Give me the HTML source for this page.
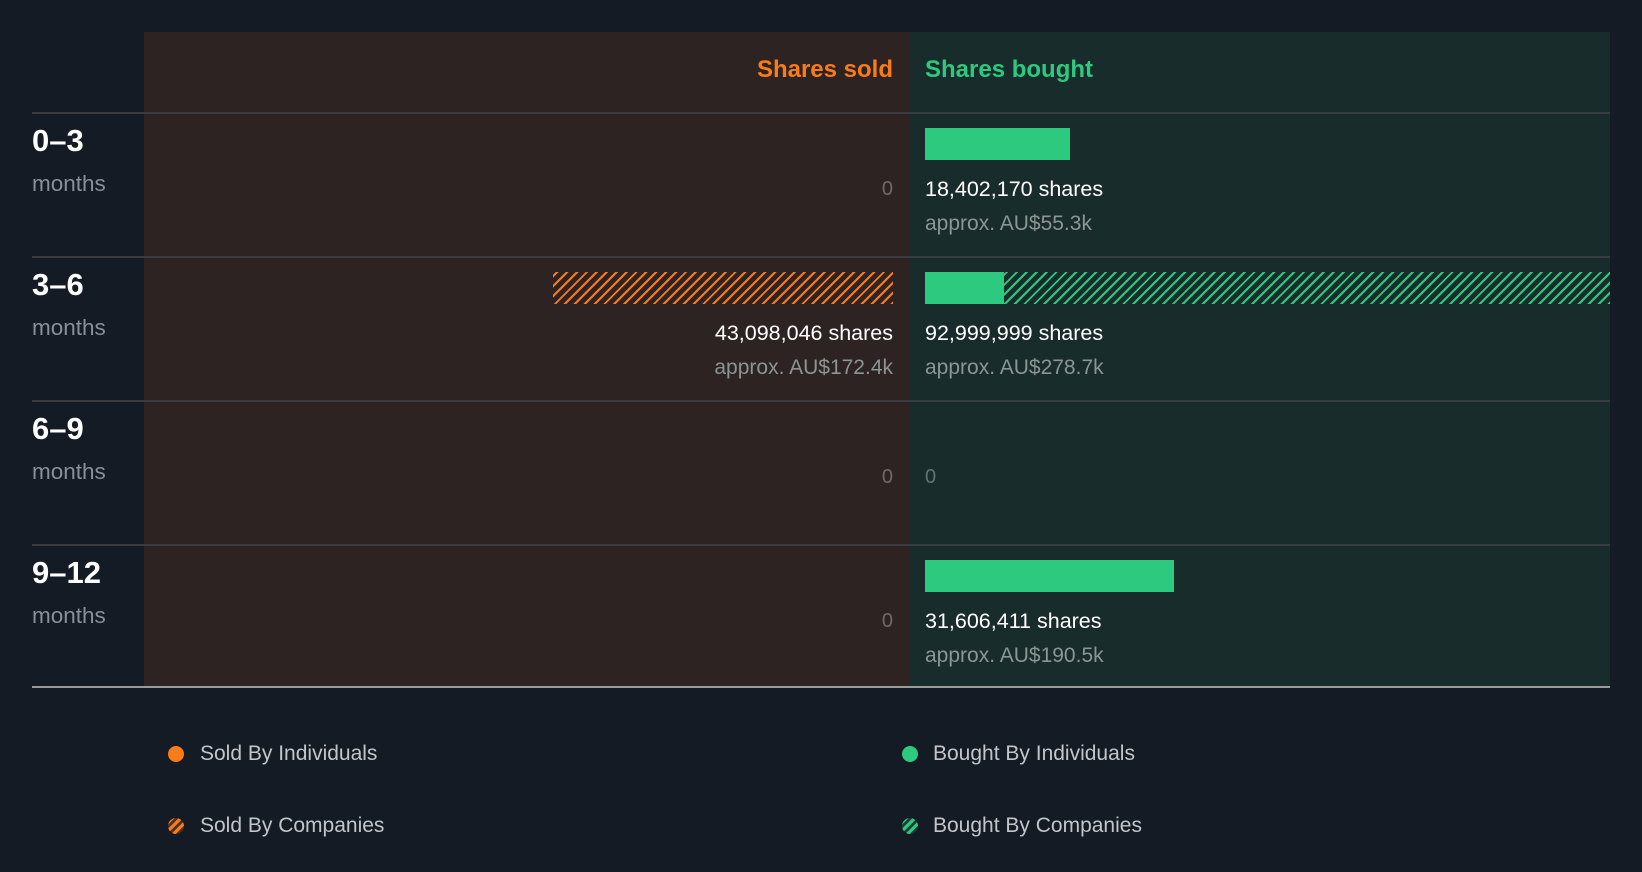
<!DOCTYPE html>
<html><head><meta charset="utf-8"><style>
*{margin:0;padding:0;box-sizing:border-box}
body{width:1642px;height:872px;background:#151b24;font-family:"Liberation Sans",Arial,sans-serif;position:relative;overflow:hidden}
.a{position:absolute;white-space:nowrap}
.sold{left:144px;top:32px;width:765px;height:655px;background:#2d2322}
.bought{left:909px;top:32px;width:701px;height:655px;background:#182c2c}
.hl{left:32px;width:1578px;height:2px;background:#3a3b3f}
.rng{left:32px;font-weight:bold;font-size:31px;color:#fff;line-height:30px}
.mo{left:32px;font-size:22.5px;color:#8a8f97;line-height:24px}
.r{right:749px;text-align:right}
.l{left:925px}
.sh{font-size:21.5px;color:#fff;line-height:24px}
.ap{font-size:21px;color:#8d9494;line-height:24px}
.z{font-size:20px;color:#6d6b6a;line-height:24px}
.zg{color:#5f7573}
.g{background:#2dc97f}
.hg{background:repeating-linear-gradient(-45deg,#2dc97f 0 2px,#182c2c 2px 7px)}
.ho{background:repeating-linear-gradient(-45deg,#f97b19 0 2px,#2d2322 2px 7px)}
.lg{font-size:21px;color:#c2c5ca;line-height:24px}
.dot{width:16px;height:16px;border-radius:50%}
</style></head><body>
<div class="a sold"></div><div class="a bought"></div>
<div class="a" style="right:749px;top:56px;font-size:24px;font-weight:bold;color:#f97b19;line-height:28px">Shares sold</div>
<div class="a" style="left:925px;top:56px;font-size:24px;font-weight:bold;color:#2dc97f;line-height:28px">Shares bought</div>
<div class="a hl" style="top:112px"></div>
<div class="a hl" style="top:256px"></div>
<div class="a hl" style="top:400px"></div>
<div class="a hl" style="top:544px"></div>
<div class="a" style="left:32px;top:686px;width:1578px;height:2px;background:#9a9a9a"></div>

<div class="a rng" style="top:126px">0–3</div><div class="a mo" style="top:172px">months</div>
<div class="a rng" style="top:270px">3–6</div><div class="a mo" style="top:316px">months</div>
<div class="a rng" style="top:414px">6–9</div><div class="a mo" style="top:460px">months</div>
<div class="a rng" style="top:558px">9–12</div><div class="a mo" style="top:604px">months</div>

<div class="a z r" style="top:177px">0</div>
<div class="a g" style="left:925px;top:128px;width:145px;height:32px"></div>
<div class="a sh l" style="top:177px">18,402,170 shares</div>
<div class="a ap l" style="top:212px">approx. AU$55.3k</div>

<div class="a ho" style="left:553px;top:272px;width:340px;height:32px"></div>
<div class="a sh r" style="top:321px">43,098,046 shares</div>
<div class="a ap r" style="top:356px">approx. AU$172.4k</div>
<div class="a g" style="left:925px;top:272px;width:79px;height:32px"></div>
<div class="a hg" style="left:1004px;top:272px;width:606px;height:32px"></div>
<div class="a sh l" style="top:321px">92,999,999 shares</div>
<div class="a ap l" style="top:356px">approx. AU$278.7k</div>

<div class="a z r" style="top:465px">0</div>
<div class="a z zg l" style="top:465px">0</div>

<div class="a z r" style="top:609px">0</div>
<div class="a g" style="left:925px;top:560px;width:249px;height:32px"></div>
<div class="a sh l" style="top:609px">31,606,411 shares</div>
<div class="a ap l" style="top:644px">approx. AU$190.5k</div>

<div class="a dot" style="left:168px;top:746px;background:#f97b19"></div>
<div class="a lg" style="left:200px;top:742px">Sold By Individuals</div>
<div class="a dot" style="left:168px;top:818px;background:repeating-linear-gradient(-45deg,#f97b19 0 3px,#4a3226 3px 6px)"></div>
<div class="a lg" style="left:200px;top:814px">Sold By Companies</div>
<div class="a dot" style="left:902px;top:746px;background:#2dc97f"></div>
<div class="a lg" style="left:933px;top:742px">Bought By Individuals</div>
<div class="a dot" style="left:902px;top:818px;background:repeating-linear-gradient(-45deg,#2dc97f 0 3px,#1c3d33 3px 6px)"></div>
<div class="a lg" style="left:933px;top:814px">Bought By Companies</div>
</body></html>
